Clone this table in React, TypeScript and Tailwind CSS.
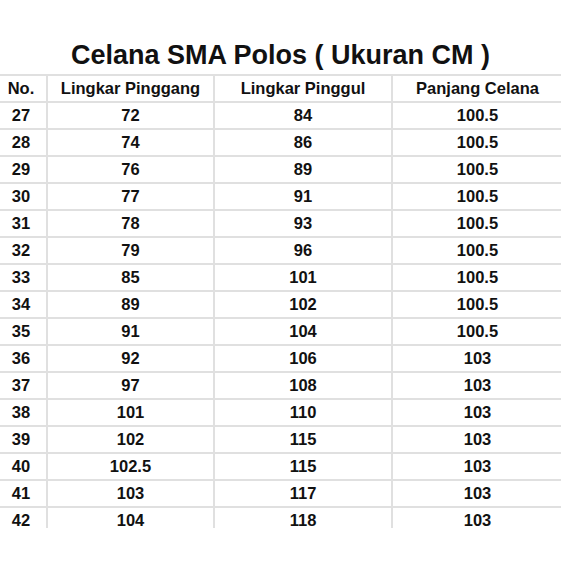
const ROWS: [number, string, string, string][] = [
  [27, "72", "84", "100.5"],
  [28, "74", "86", "100.5"],
  [29, "76", "89", "100.5"],
  [30, "77", "91", "100.5"],
  [31, "78", "93", "100.5"],
  [32, "79", "96", "100.5"],
  [33, "85", "101", "100.5"],
  [34, "89", "102", "100.5"],
  [35, "91", "104", "100.5"],
  [36, "92", "106", "103"],
  [37, "97", "108", "103"],
  [38, "101", "110", "103"],
  [39, "102", "115", "103"],
  [40, "102.5", "115", "103"],
  [41, "103", "117", "103"],
  [42, "104", "118", "103"],
];

const HEADERS = ["No.", "Lingkar Pinggang", "Lingkar Pinggul", "Panjang Celana"];

export default function App() {
  return (
    <div
      className="w-[561px] h-[561px] bg-white overflow-hidden text-[#111]"
      style={{ fontFamily: '"Liberation Sans", Arial, sans-serif' }}
    >
      <h1 className="pt-[42px] text-center text-[27px] leading-[27px] font-bold">
        Celana SMA Polos ( Ukuran CM )
      </h1>
      <div className="mt-[5px] h-[454px] overflow-hidden">
        <table className="-ml-[6px] w-[568px] table-fixed border-collapse text-[16.5px] font-bold">
          <colgroup>
            <col className="w-[52px]" />
            <col className="w-[167px]" />
            <col className="w-[178px]" />
            <col className="w-[171px]" />
          </colgroup>
          <thead>
            <tr className="h-[27px]">
              {HEADERS.map((h) => (
                <th
                  key={h}
                  className="border-2 border-[#e0e0e0] p-0 text-center font-bold leading-none"
                >
                  {h}
                </th>
              ))}
            </tr>
          </thead>
          <tbody>
            {ROWS.map((r) => (
              <tr key={r[0]} className="h-[27px]">
                {r.map((v, i) => (
                  <td
                    key={i}
                    className="border-2 border-[#e0e0e0] p-0 text-center leading-none"
                  >
                    {v}
                  </td>
                ))}
              </tr>
            ))}
          </tbody>
        </table>
      </div>
    </div>
  );
}
